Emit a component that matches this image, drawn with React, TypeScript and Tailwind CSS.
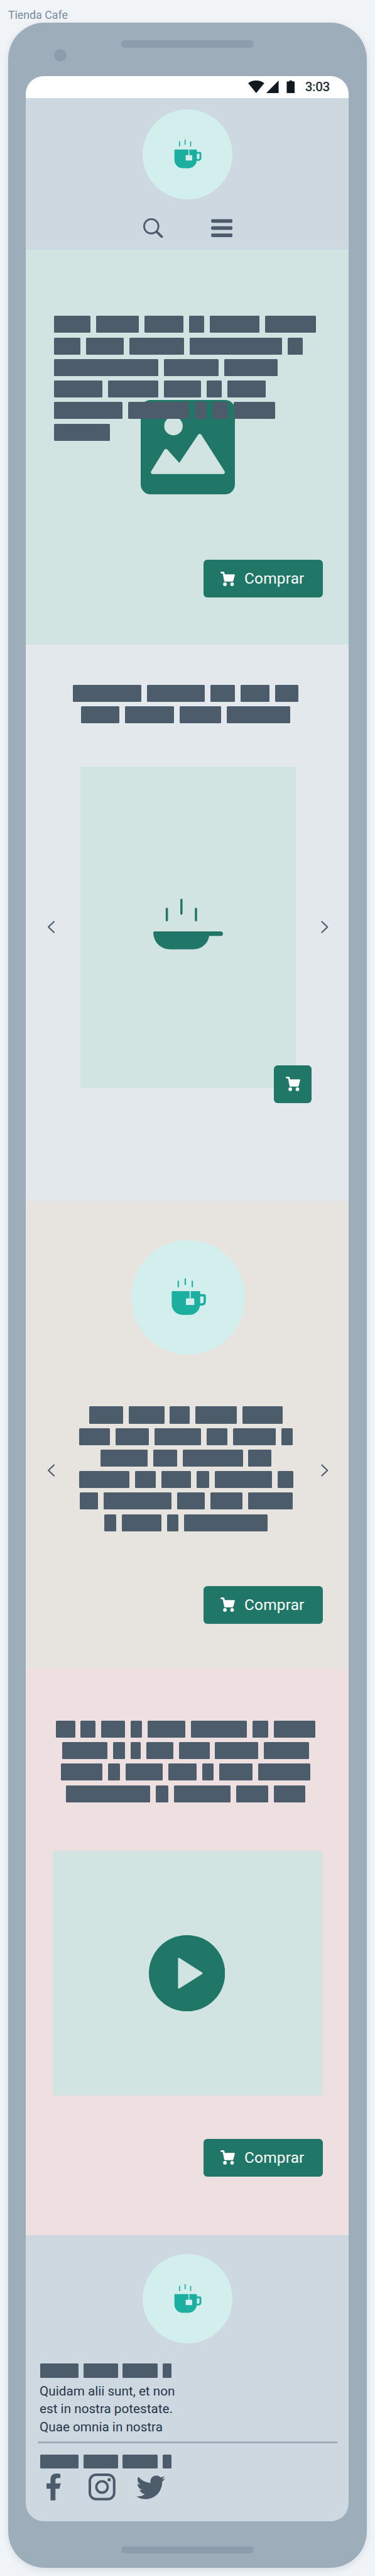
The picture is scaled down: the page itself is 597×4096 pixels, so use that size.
import React from "react";
import { FaTwitter } from "react-icons/fa";

const UNIT = 0.38074;

const heroCopy = [
  [152, 180, 163, 63, 208, 212],
  [110, 158, 229, 386, 65],
  [437, 228, 224],
  [204, 210, 154, 64, 159],
  [286, 257, 50, 64, 175],
  [235],
];
const productCopy = [
  [285, 243, 102, 120, 97],
  [159, 205, 175, 263],
];
const aboutCopy = [
  [142, 148, 83, 173, 169],
  [128, 139, 196, 87, 178, 48],
  [196, 101, 251, 97],
  [210, 87, 124, 52, 240, 65],
  [78, 284, 114, 136, 185],
  [49, 166, 49, 350],
];
const videoCopy = [
  [81, 63, 98, 49, 158, 233, 65, 175],
  [188, 50, 43, 113, 127, 179, 189],
  [174, 51, 154, 120, 46, 140, 219],
  [352, 52, 236, 134, 131],
];
const footerCopy = [[159, 144, 147, 37]];

function Words({
  rows,
  center = false,
  small = false,
}: {
  rows: number[][];
  center?: boolean;
  small?: boolean;
}) {
  return (
    <div className="flex flex-col gap-[7.13px]">
      {rows.map((row, i) => (
        <div
          key={i}
          className={`flex ${center ? "justify-center" : ""} ${
            small ? "h-[22.1px] gap-[7.8px]" : "h-[27.12px] gap-[8.95px]"
          }`}
        >
          {row.map((w, j) => (
            <span
              key={j}
              className="h-full shrink-0 rounded-[1.5px] bg-[#4c5c6a]"
              style={{ width: w * UNIT }}
            />
          ))}
        </div>
      ))}
    </div>
  );
}

function CupBadge({ large = false }: { large?: boolean }) {
  return (
    <div
      className={`shrink-0 rounded-full bg-[#d2efed] ${
        large ? "size-[181.3px]" : "size-[142.8px]"
      }`}
    >
      <svg viewBox="0 0 200 200" className="size-full">
        <g transform="translate(52 56) scale(0.33333)">
          <path
            d="M91.5 48V77M128.5 36V65M165.5 48V77"
            stroke="#1cae9f"
            strokeWidth="7"
            strokeLinecap="round"
          />
          <path
            d="M60 100H204Q207 100 207 103V116H227Q237 116 237 126V155Q237 176 216 176H206C202 204 180 225 150 225H114C80 225 57 199 57 168V103Q57 100 60 100Z"
            fill="#1cae9f"
          />
          <path d="M207 128H225V152Q225 164 214 164H207Z" fill="#d2efed" />
          <path d="M151 99H157V139H151Z" fill="#d2efed" />
          <rect x="132" y="138" width="44" height="35" rx="3" fill="#d2efed" />
        </g>
      </svg>
    </div>
  );
}

function Cart() {
  return (
    <svg viewBox="0 0 96 96" className="size-[22.8px] shrink-0" fill="#fff">
      <path d="M6 0H20Q25 1 26 5L29 18H92Q97 19 96 24L86 62Q84 66 81 66H29Q26 66 25 63L16 16Q15 12 12 12H6A6 6 0 0 1 6 0Z" />
      <circle cx="30" cy="84" r="12" />
      <circle cx="78" cy="84" r="12" />
    </svg>
  );
}

function BuyButton() {
  return (
    <button className="flex h-[60px] w-[190px] shrink-0 items-center rounded-[6px] bg-[#217767] pl-[27.1px] text-white">
      <Cart />
      <span className="ml-[15px] text-[24.4px] leading-none tracking-[0.2px]">Comprar</span>
    </button>
  );
}

function Chevron({ right = false }: { right?: boolean }) {
  return (
    <svg
      viewBox="0 0 16 28"
      className="h-[20px] w-[11.4px] shrink-0"
      fill="none"
      stroke="#4c5c6a"
      strokeWidth="3"
      strokeLinecap="round"
      strokeLinejoin="round"
    >
      <path d={right ? "M2 2L14.5 14L2 26" : "M14 2L1.5 14L14 26"} />
    </svg>
  );
}

function StatusBar() {
  return (
    <div className="flex h-[34.3px] items-start justify-end bg-white pr-[30.6px]">
      <svg viewBox="36 60 312 84" className="mt-[7.1px] h-[20px] w-[74.3px]" fill="#101920">
        <path d="M36 78Q58 60 90 60Q122 60 144 78L90 144Z" />
        <path d="M240 60V144H157Z" />
        <path d="M294 66H312V60H330V66H348V144H294Z" />
      </svg>
      <span className="ml-[16.6px] mt-[5px] text-[20.7px] font-medium leading-[24px] tracking-[-0.4px] text-[#263238]">
        3:03
      </span>
    </div>
  );
}

function Header() {
  return (
    <header className="flex h-[241.2px] flex-col items-center bg-[#ced8e1] pt-[18.6px]">
      <CupBadge />
      <div className="mt-[30px] flex gap-[75.7px] pl-[1.4px]">
        <svg viewBox="0 0 44 44" className="size-[31.4px]" fill="none" stroke="#4c5c6a">
          <circle cx="18" cy="18" r="16" strokeWidth="4" />
          <path d="M30 30L41.3 41.3" strokeWidth="5.4" strokeLinecap="round" />
        </svg>
        <svg viewBox="0 0 48 44" className="h-[31.4px] w-[34.3px]" fill="#4c5c6a">
          <rect y="2" width="48" height="8" rx="3" />
          <rect y="18" width="48" height="8" rx="3" />
          <rect y="34" width="48" height="8" rx="3" />
        </svg>
      </div>
    </header>
  );
}

function Hero() {
  return (
    <section className="relative flex h-[627.9px] flex-col bg-[#d2e4e1] pb-[74.2px] pl-[44.3px] pr-[41.4px] pt-[105.6px]">
      <svg viewBox="0 0 630 630" className="absolute left-[182.1px] top-[239px] size-[150px]">
        <rect width="630" height="630" rx="66" fill="#217767" />
        <circle cx="219" cy="174" r="62" fill="#d2e4e1" />
        <path
          d="M69 478L158 333Q168 320 180 333L258 420L384 232Q394 219 405 232L562 478Q566 493 552 495H80Q66 493 69 478Z"
          fill="#d2e4e1"
        />
      </svg>
      <div className="relative">
        <Words rows={heroCopy} />
      </div>
      <div className="mt-auto flex justify-end">
        <BuyButton />
      </div>
    </section>
  );
}

function Product() {
  return (
    <section className="h-[884.9px] bg-[#e3e8ec] pt-[64.2px]">
      <div className="pr-[6px]">
        <Words rows={productCopy} center />
      </div>
      <div className="mt-[68.5px] flex items-center justify-between pl-[34.3px] pr-[32.9px]">
        <Chevron />
        <div className="relative flex h-[510.9px] w-[342.8px] items-center justify-center bg-[#d2e4e1] pb-[9.3px]">
          <svg viewBox="121 69 466 338" className="h-[80.4px] w-[111px]">
            <path
              d="M211.5 136.5V213.5M309 77V169M406.5 136.5V213.5"
              stroke="#217767"
              strokeWidth="15"
              strokeLinecap="round"
            />
            <path
              d="M127 288H572a15 15 0 0 1 0 30H495C486 371 443 407 388 407H232C167 407 122 356 121 296Q121 288 127 288Z"
              fill="#217767"
            />
          </svg>
          <button className="absolute left-[308.5px] top-[475.2px] flex size-[60px] items-center justify-center rounded-[6px] bg-[#217767]">
            <Cart />
          </button>
        </div>
        <Chevron right />
      </div>
    </section>
  );
}

function About() {
  return (
    <section className="flex h-[742.8px] flex-col bg-[#e7e4df] pb-[70.6px] pt-[62.8px]">
      <div className="flex justify-center pl-[1.4px]">
        <CupBadge large />
      </div>
      <div className="mt-[82.8px] flex items-center justify-between pl-[34.3px] pr-[32.9px]">
        <div className="pt-[4px]">
          <Chevron />
        </div>
        <div className="w-[350px] pr-[6px]">
          <Words rows={aboutCopy} center />
        </div>
        <div className="pt-[4px]">
          <Chevron right />
        </div>
      </div>
      <div className="mt-auto flex justify-end pr-[41.4px]">
        <BuyButton />
      </div>
    </section>
  );
}

function Video() {
  return (
    <section className="flex h-[901.3px] flex-col bg-[#eee0e0] pb-[92.8px] pt-[83.5px]">
      <div className="pr-[6px]">
        <Words rows={videoCopy} center />
      </div>
      <div className="mx-auto mt-[77px] flex h-[389.8px] w-[428.5px] shrink-0 items-center justify-center bg-[#d2e4e1] pr-[1.4px]">
        <svg viewBox="0 0 170 170" className="size-[121.4px]">
          <circle cx="85" cy="85" r="85" fill="#217767" />
          <path
            d="M65 53Q65 49.5 68.5 51L118.5 83Q121 85 118.5 87L68.5 118.5Q65 120 65 116.500Z"
            fill="#d2e4e1"
          />
        </svg>
      </div>
      <div className="mt-auto flex justify-end pr-[41.4px]">
        <BuyButton />
      </div>
    </section>
  );
}

function Footer() {
  return (
    <footer className="flex h-[455.2px] flex-col bg-[#ced8e1] pt-[30px]">
      <div className="flex justify-center">
        <CupBadge />
      </div>
      <div className="mt-[32px] pl-[22.9px]">
        <Words rows={footerCopy} small />
      </div>
      <p className="mt-[7.1px] whitespace-nowrap pl-[21.6px] text-[20.7px] leading-[28.54px] text-[#263746]">
        Quidam alii sunt, et non
        <br />
        est in nostra potestate.
        <br />
        Quae omnia in nostra
      </p>
      <div className="mx-[18.600px] mt-[8.6px] h-[3px] shrink-0 bg-[#9eadba]" />
      <div className="mt-[17.8px] pl-[22.9px]">
        <Words rows={footerCopy} small />
      </div>
      <div className="mt-[8.6px] flex h-[42.8px] items-center pl-[32.9px]">
        <svg viewBox="72 786 96 180" className="h-[42.8px] w-[22.8px]" fill="#4c5c6a">
          <path d="M99 966V888H72V852H99V829C99 800 112 786 140 786Q156 786 165 788V816H148C136 816 132 821 132 832V852H168L158 888H132V966Z" />
        </svg>
        <svg
          viewBox="0 0 180 180"
          className="ml-[44.2px] size-[42.8px]"
          fill="none"
          stroke="#4c5c6a"
          strokeWidth="17"
        >
          <rect x="8.5" y="8.5" width="163" height="163" rx="42" />
          <circle cx="90" cy="90" r="38" strokeWidth="16" />
          <circle cx="138" cy="42" r="11" fill="#4c5c6a" stroke="none" />
        </svg>
        <FaTwitter className="ml-[32.4px] size-[46px] text-[#4c5c6a]" />
      </div>
    </footer>
  );
}

export default function App() {
  return (
    <div
      className="h-[4096px] w-[597px] overflow-hidden bg-[#f0f4f7]"
      style={{ fontFamily: 'Roboto, "Liberation Sans", sans-serif' }}
    >
      <div className="h-[35.7px] pl-[12.9px] pt-[12.500px] text-[17.8px] leading-[22px] text-[#798b9c]">
        Tienda Cafe
      </div>
      <div className="ml-[12.9px] h-[4047.5px] w-[571.2px] rounded-[58px] bg-[#9eadba] px-[28.6px] shadow-[0_3px_12px_rgba(40,60,80,0.12)]">
        <div className="grid h-[85.6px] grid-cols-[1fr_211.4px_1fr] items-start">
          <div className="ml-[44.3px] mt-[42.8px] size-[20px] rounded-full bg-[#8e9dad]" />
          <div className="mt-[28.500px] h-[11.4px] rounded-[5.7px] bg-[#8e9dad]" />
        </div>
        <div className="overflow-hidden rounded-[28.5px]">
          <StatusBar />
          <Header />
          <Hero />
          <Product />
          <About />
          <Video />
          <Footer />
        </div>
        <div className="mx-auto mt-[40px] h-[11.4px] w-[211.4px] rounded-[5.7px] bg-[#8e9dad]" />
      </div>
    </div>
  );
}
